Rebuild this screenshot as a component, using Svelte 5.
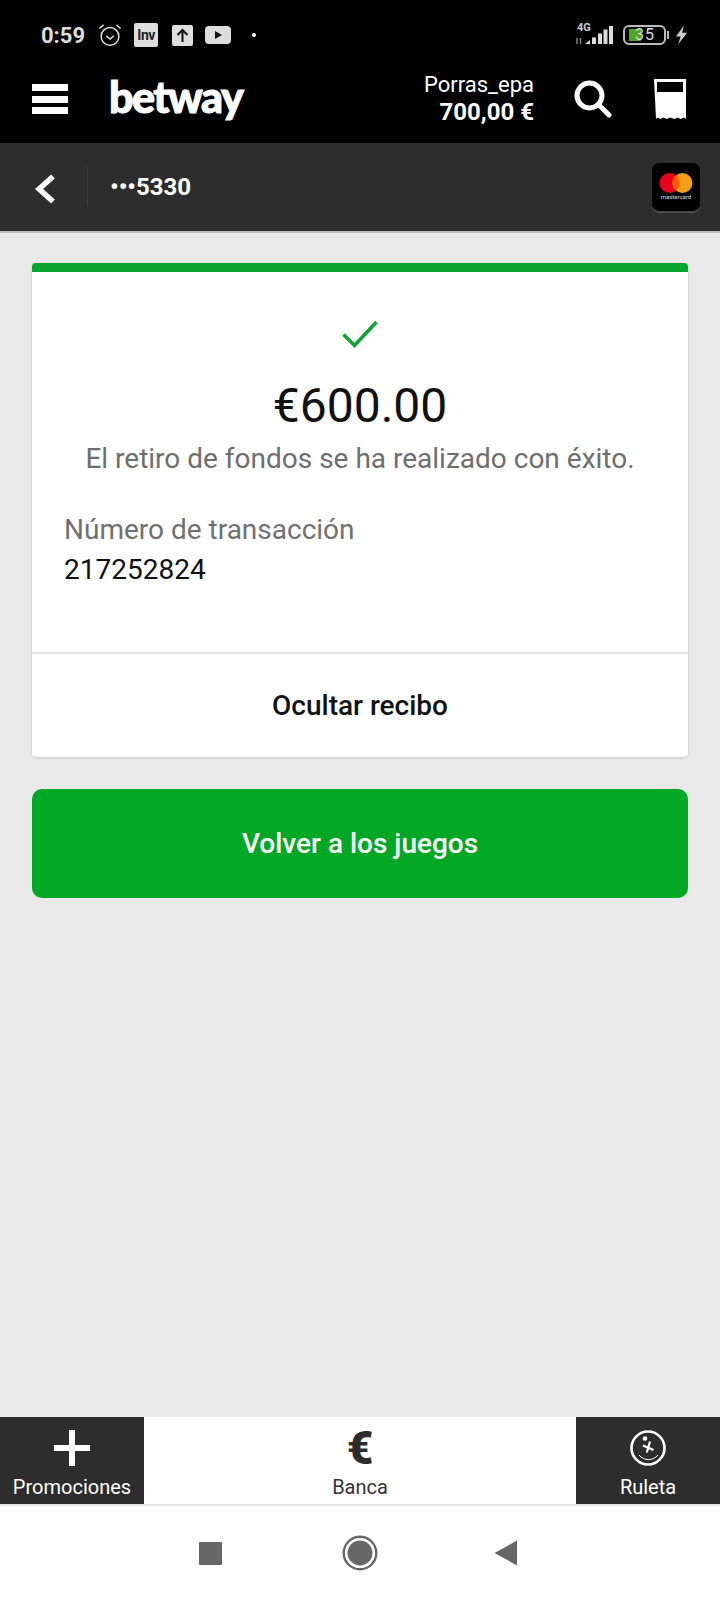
<script>
  let amount = '€600.00';
  let txId = '217252824';
</script>

<div class="page">
  <header class="top">
    <div class="status">
      <div class="status-left">
        <span class="time">0:59</span>
        <svg class="alarm" viewBox="0 0 26 26" width="24" height="24" fill="none" stroke="#ddd" stroke-width="1.6">
          <circle cx="13" cy="14.5" r="9.6" />
          <path d="M9 14l4 3.4 4-3.4" />
          <path d="M1.5 6L6 2M24.5 6L20 2" />
        </svg>
        <span class="badge inv">Inv</span>
        <svg class="up" viewBox="0 0 21 21" width="21" height="21">
          <rect width="21" height="21" rx="2" fill="#ddd" />
          <path d="M10.5 17V5M5.5 10l5-5 5 5" fill="none" stroke="#111" stroke-width="2" />
        </svg>
        <svg class="yt" viewBox="0 0 26 18" width="26" height="18">
          <rect width="26" height="18" rx="4" fill="#ddd" />
          <path d="M10 5l7 4-7 4z" fill="#111" />
        </svg>
        <span class="dot"></span>
      </div>
      <div class="status-right">
        <div class="signal">
          <span class="net">4G</span>
          <svg viewBox="0 0 38 20" width="38" height="20">
            <path d="M2 19V13M5.500 19V13" stroke="#888" stroke-width="1.400" />
            <path d="M10 19l5-4v4zM17 12.500h4V19h-4zM23 8.500h4V19h-4zM28.500 4.500h4V19h-4zM34 1h4v18h-4z" fill="#ddd" />
          </svg>
        </div>
        <div class="battery">
          <span class="fill"></span>
          <span class="level">35</span>
        </div>
        <span class="nub"></span>
        <svg viewBox="0 0 14 20" width="13" height="20">
          <path d="M9.500 0L1 11.500h5L3.500 20 13 7.500H7.800z" fill="#ccc" />
        </svg>
      </div>
    </div>

    <div class="bar">
      <div class="burger"><span></span><span></span><span></span></div>
      <span class="logo">betway</span>
      <div class="account">
        <span class="user">Porras_epa</span>
        <span class="balance">700,00 €</span>
      </div>
      <svg class="search" viewBox="0 0 38 38" width="38" height="38" fill="none" stroke="#fff">
        <circle cx="15.500" cy="15.500" r="12.500" stroke-width="5" />
        <path d="M24.500 24.500L35 35" stroke-width="5" stroke-linecap="round" />
      </svg>
      <svg class="slip" viewBox="0 0 32 40" width="32" height="40">
        <path fill-rule="evenodd" fill="#fff" d="M0 0h32v40l-2-1.500-3.200 1.500-3.200-1.500-3.200 1.500-4.400-1.500-3.200 1.500-3.200-1.500-3.200 1.500-3.200-1.500-1.200 1.500zM3 3v10h26V3z" />
      </svg>
    </div>
  </header>

  <div class="subbar">
    <svg class="back" viewBox="0 0 20 30" width="20" height="30" fill="none" stroke="#fff" stroke-width="5.500">
      <path d="M18 2.500L4 15l14 12.500" />
    </svg>
    <span class="sep"></span>
    <span class="card-no">•••5330</span>
    <div class="mc">
      <svg viewBox="0 0 48 48" width="48" height="48">
        <circle cx="17.500" cy="20" r="10" fill="#e8001c" />
        <circle cx="30.500" cy="20" r="10" fill="#f79e1b" />
        <path d="M24 12.200a10 10 0 0 1 0 15.600a10 10 0 0 1 0-15.600z" fill="#ff5f00" />
        <text x="24" y="36" text-anchor="middle" class="mc-text">mastercard</text>
      </svg>
    </div>
  </div>

  <main class="content">
    <section class="receipt">
      <div class="receipt-body">
        <svg class="check" viewBox="0 0 36 28" width="36" height="28" fill="none" stroke="#0aa52e" stroke-width="3.500">
          <path d="M1.500 14.500L12.500 25.500 34.500 2" />
        </svg>
        <div class="amount">{amount}</div>
        <p class="msg">El retiro de fondos se ha realizado con éxito.</p>
        <div class="tx">
          <div class="tx-label">Número de transacción</div>
          <div class="tx-id">{txId}</div>
        </div>
      </div>
      <button class="hide" type="button">Ocultar recibo</button>
    </section>
    <button class="back-games" type="button">Volver a los juegos</button>
  </main>

  <nav class="tabs">
    <div class="tab dark">
      <svg viewBox="0 0 36 36" width="36" height="36">
        <path d="M15 0h6v15h15v6H21v15h-6V21H0v-6h15z" fill="#fff" />
      </svg>
      <span>Promociones</span>
    </div>
    <div class="tab mid">
      <span class="euro">€</span>
      <span>Banca</span>
    </div>
    <div class="tab dark">
      <svg viewBox="0 0 36 36" width="36" height="36" fill="none" stroke="#fff">
        <circle cx="18" cy="18" r="16.500" stroke-width="2.600" />
        <circle cx="15" cy="8.500" r="2.300" fill="#fff" stroke="none" />
        <path d="M13 15.500l10.500 4.500M20 11.500l-3.200 11" stroke-width="2.200" />
        <path d="M9 25a12 12 0 0 0 19 0" stroke-width="1" />
      </svg>
      <span>Ruleta</span>
    </div>
  </nav>

  <footer class="sysnav">
    <span class="sq"></span>
    <svg viewBox="0 0 36 36" width="36" height="36">
      <circle cx="18" cy="18" r="16.300" fill="none" stroke="#666" stroke-width="2.400" />
      <circle cx="18" cy="18" r="12.500" fill="#666" />
    </svg>
    <svg viewBox="0 0 24 26" width="24" height="26">
      <path d="M23 .5v25L.5 13z" fill="#666" />
    </svg>
  </footer>
</div>

<style>
  :global(body) {
    margin: 0;
    background: #e9e9e9;
    font-family: Roboto, "Liberation Sans", sans-serif;
  }

  .page {
    display: flex;
    flex-direction: column;
    width: 720px;
    height: 1600px;
    overflow: hidden;
  }

  .top {
    background: #000;
    height: 143px;
  }

  .status {
    display: flex;
    justify-content: space-between;
    align-items: center;
    height: 70px;
    padding: 0 32px 0 41px;
    box-sizing: border-box;
  }

  .status-left, .status-right {
    display: flex;
    align-items: center;
  }

  .time {
    color: #ddd;
    font-size: 22px;
    font-weight: 700;
    margin-right: 13px;
  }

  .badge.inv {
    display: block;
    width: 24px;
    height: 24px;
    margin-left: 12px;
    background: #ddd;
    border-radius: 2px;
    color: #222;
    font-size: 14px;
    font-weight: 700;
    letter-spacing: -0.500px;
    line-height: 24px;
    text-align: center;
  }

  .up {
    margin-left: 14px;
  }

  .yt {
    margin-left: 12px;
  }

  .dot {
    width: 4px;
    height: 4px;
    margin-left: 21px;
    background: #fff;
    border-radius: 50%;
  }

  .signal {
    position: relative;
    margin-right: 10px;
  }

  .signal svg {
    display: block;
  }

  .net {
    position: absolute;
    left: 2px;
    top: -3px;
    color: #ccc;
    font-size: 11px;
    font-weight: 700;
    line-height: 1;
  }

  .battery {
    position: relative;
    width: 39px;
    height: 16px;
    border: 2px solid #bbb;
    border-radius: 6px;
  }

  .fill {
    position: absolute;
    left: 4px;
    top: 2px;
    width: 12px;
    height: 12px;
    background: #4ca820;
    border-radius: 1px;
  }

  .level {
    position: absolute;
    left: 10px;
    top: 0;
    color: #ddd;
    font-size: 16px;
    line-height: 16px;
    letter-spacing: 1px;
  }

  .nub {
    width: 2px;
    height: 8px;
    margin: 0 6px 0 1px;
    background: #bbb;
  }

  .bar {
    display: flex;
    align-items: center;
    height: 73px;
    padding: 0 34px 15px 32px;
    box-sizing: border-box;
  }

  .burger {
    display: flex;
    flex-direction: column;
    justify-content: space-between;
    width: 36px;
    height: 30px;
  }

  .burger span {
    height: 7px;
    background: #fff;
  }

  .logo {
    margin: -5px 0 0 41px;
    color: #fff;
    font-family: Lato, sans-serif;
    font-size: 43px;
    font-weight: 900;
    letter-spacing: -1.500px;
    line-height: 1;
    -webkit-text-stroke: 1px #fff;
  }

  .account {
    display: flex;
    flex-direction: column;
    align-items: flex-end;
    margin-left: auto;
    color: #fff;
  }

  .user {
    font-size: 22px;
    line-height: 27px;
  }

  .balance {
    font-size: 24px;
    font-weight: 700;
    line-height: 29px;
  }

  .search {
    margin: 0 42px 0 40px;
  }

  .subbar {
    display: flex;
    align-items: center;
    height: 90px;
    padding: 0 20px 0 35px;
    box-sizing: border-box;
    background: #2d2d2d;
    border-bottom: 2px solid #bdbdbd;
  }

  .back {
    margin-top: 4px;
  }

  .sep {
    width: 1px;
    height: 40px;
    margin: 0 22px 0 32px;
    background: #3c3c3c;
  }

  .card-no {
    color: #fff;
    font-size: 24px;
    font-weight: 700;
  }

  .mc {
    width: 48px;
    height: 48px;
    margin-left: auto;
    background: #000;
    border-radius: 7px;
    box-shadow: 0 2px 0 #4a4a4a;
    overflow: hidden;
  }

  .mc svg {
    display: block;
  }

  .mc-text {
    fill: #ddd;
    font-size: 6px;
    font-family: Roboto, sans-serif;
  }

  .content {
    display: flex;
    flex: 1;
    flex-direction: column;
    gap: 32px;
    padding: 30px 32px 0;
    background: #e9e9e9;
  }

  .receipt {
    background: #fff;
    border-top: 9px solid #0aa52e;
    border-radius: 4px;
    box-shadow: 0 1px 3px rgba(0, 0, 0, 0.15);
  }

  .receipt-body {
    display: flex;
    flex-direction: column;
    align-items: center;
    height: 380px;
    padding: 48px 32px 0;
    box-sizing: border-box;
  }

  .check {
    display: block;
  }

  .amount {
    margin-top: 30px;
    color: #111;
    font-size: 48px;
    line-height: 56px;
  }

  .msg {
    margin: 7px 0 0;
    color: #6e6e6e;
    font-size: 28px;
    line-height: 36px;
    white-space: nowrap;
  }

  .tx {
    align-self: stretch;
    margin-top: 33px;
    font-size: 28px;
    line-height: 40px;
  }

  .tx-label {
    color: #707070;
  }

  .tx-id {
    color: #111;
  }

  .hide {
    display: block;
    width: 100%;
    height: 105px;
    padding: 0;
    background: none;
    border: 0;
    border-top: 2px solid #e6e6e6;
    color: #111;
    font: 500 28px Roboto, sans-serif;
  }

  .back-games {
    height: 109px;
    padding: 0;
    background: #00a826;
    border: 0;
    border-radius: 10px;
    color: #fff;
    font: 500 28px Roboto, sans-serif;
  }

  .tabs {
    display: flex;
    height: 87px;
    background: #fff;
    border-bottom: 2px solid #e6e6e6;
  }

  .tab {
    display: flex;
    flex-direction: column;
    align-items: center;
    padding-top: 13px;
    box-sizing: border-box;
    font-size: 20px;
    line-height: 24px;
  }

  .tab svg {
    display: block;
    margin-bottom: 9px;
  }

  .tab.dark {
    width: 144px;
    background: #2d2d2d;
    color: #fff;
  }

  .tab.mid {
    flex: 1;
    color: #333;
  }

  .euro {
    height: 45px;
    color: #2d2d2d;
    font-size: 46px;
    font-weight: 900;
    line-height: 36px;
  }

  .sysnav {
    display: flex;
    justify-content: center;
    align-items: center;
    gap: 116px;
    height: 94px;
    padding-right: 4px;
    background: #fff;
  }

  .sq {
    width: 23px;
    height: 23px;
    margin-right: 4px;
    background: #666;
    border-radius: 1px;
  }
</style>
